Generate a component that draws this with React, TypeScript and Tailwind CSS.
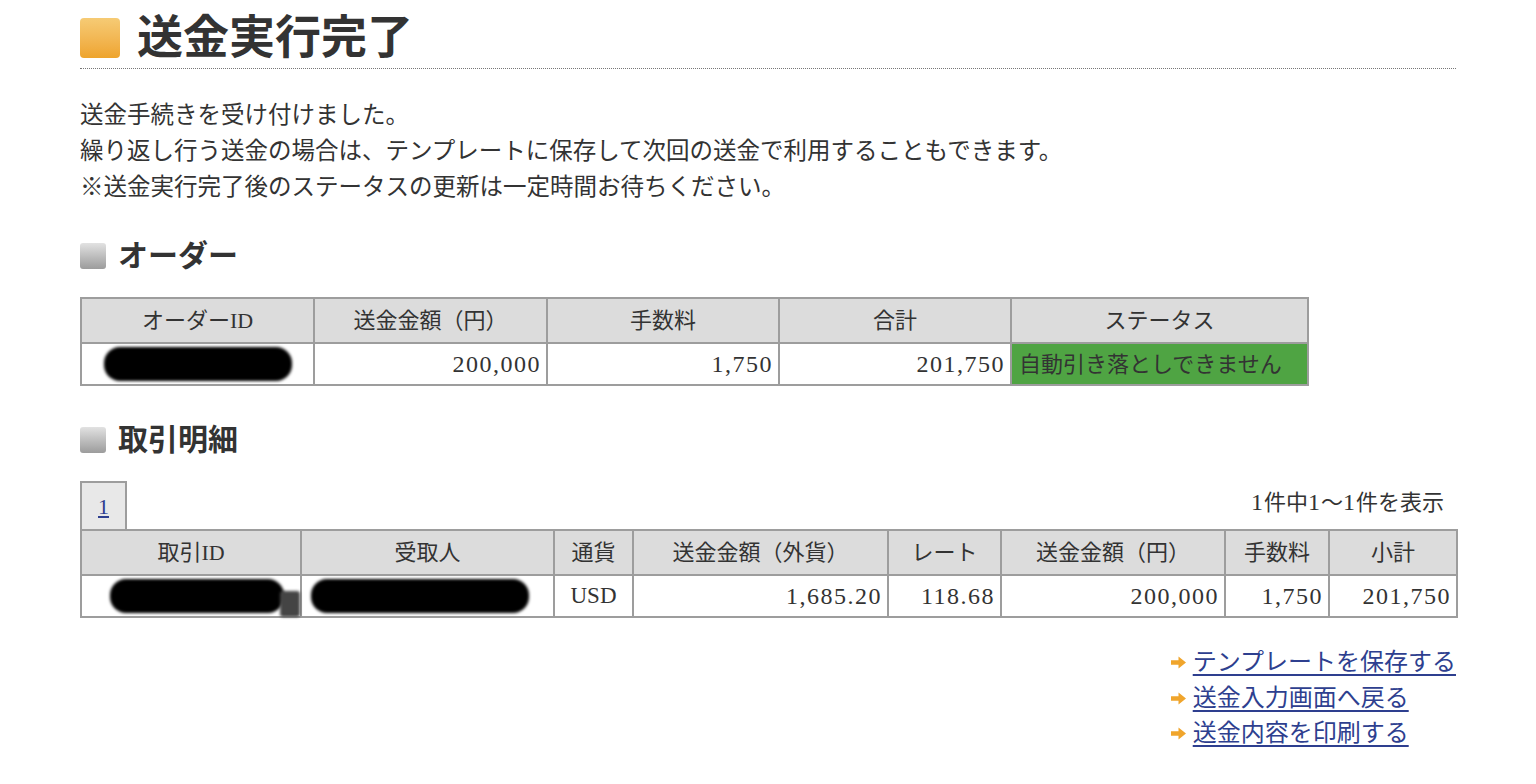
import React from "react";

const FONT = '"Liberation Serif", "Noto Sans CJK JP", serif';

function Arrow() {
  return (
    <svg width="17" height="15" viewBox="0 0 17 15" className="shrink-0">
      <path d="M1 5.3 H8.5 V1.5 L16 7.5 L8.5 13.5 V9.7 H1 Z" fill="#f0a52c" />
    </svg>
  );
}

function Blob({ w, extra, start }: { w: number; extra?: boolean; start?: number }) {
  return (
    <div
      className="relative flex items-center"
      style={start !== undefined ? { paddingLeft: start } : { justifyContent: "center" }}
    >
      <div className="relative">
        <div
          className="h-[34px] rounded-[16px] bg-black blur-[1.5px]"
          style={{ width: w }}
        />
        {extra && (
          <div className="absolute left-[170px] top-[12px] h-[26px] w-[20px] rounded-[3px] bg-[#444] blur-[1.5px]" />
        )}
      </div>
    </div>
  );
}

function SectionHeading({ children }: { children: React.ReactNode }) {
  return (
    <div className="flex h-[40px] items-center gap-[12px]">
      <div className="h-[26px] w-[26px] rounded-[3px] bg-gradient-to-b from-[#e2e2e2] to-[#9c9c9c]" />
      <h2 className="text-[30px] font-bold leading-[40px] text-[#333]">{children}</h2>
    </div>
  );
}

const th = "border-2 border-[#9d9d9d] bg-[#dcdcdc] h-[45px] text-center font-normal text-[22px] text-[#333]";
const td = "border-2 border-[#9d9d9d] bg-white h-[42px] text-[22px] text-[#333] px-[7px]";
const num = "text-right !text-[24px] tracking-[1.5px] !pr-[5px]";

export default function App() {
  return (
    <div className="min-h-screen bg-white px-[80px] pt-[14px]" style={{ fontFamily: FONT }}>
      {/* Title */}
      <div className="flex h-[48px] items-center gap-[17px]">
        <div className="h-[40px] w-[40px] rounded-[4px] bg-gradient-to-b from-[#f6cb74] to-[#eea42c]" />
        <h1 className="text-[46px] font-bold leading-[48px] text-[#333]">送金実行完了</h1>
      </div>
      <div className="mt-[6px] border-b border-dotted border-[#777]" />

      {/* Paragraph */}
      <div className="mt-[28px] text-[23.5px] leading-[36px] text-[#333]">
        <p>送金手続きを受け付けました。</p>
        <p>繰り返し行う送金の場合は、テンプレートに保存して次回の送金で利用することもできます。</p>
        <p>※送金実行完了後のステータスの更新は一定時間お待ちください。</p>
      </div>

      {/* Order */}
      <div className="mt-[31px]">
        <SectionHeading>オーダー</SectionHeading>
      </div>
      <table className="mt-[21px] w-[1227px] table-fixed border-collapse">
        <thead>
          <tr>
            <th className={`${th} w-[233px]`}>オーダーID</th>
            <th className={`${th} w-[233px]`}>送金金額（円）</th>
            <th className={`${th} w-[232px]`}>手数料</th>
            <th className={`${th} w-[232px]`}>合計</th>
            <th className={`${th} w-[297px]`}>ステータス</th>
          </tr>
        </thead>
        <tbody>
          <tr>
            <td className={td}>
              <Blob w={188} />
            </td>
            <td className={`${td} ${num}`}>200,000</td>
            <td className={`${td} ${num}`}>1,750</td>
            <td className={`${td} ${num}`}>201,750</td>
            <td className={`${td} !bg-[#4fa443] text-left text-[#1e2a1c]`}>自動引き落としできません</td>
          </tr>
        </tbody>
      </table>

      {/* Transactions */}
      <div className="mt-[34px]">
        <SectionHeading>取引明細</SectionHeading>
      </div>
      <div className="mt-[21px] flex items-start justify-between">
        <div className="flex h-[48px] w-[47px] items-center justify-center border-2 border-b-0 border-[#9d9d9d] bg-[#e8e8e8]">
          <a href="#" className="text-[22px] text-[#2e3f8f] underline">1</a>
        </div>
        <div className="mt-[3px] pr-[12px] text-[22px] leading-[36px] text-[#333]">
          <span className="text-[24px] tracking-[1px]">1</span>件中<span className="text-[24px] tracking-[1px]">1</span>〜<span className="text-[24px] tracking-[1px]">1</span>件を表示
        </div>
      </div>
      <table className="w-full table-fixed border-collapse">
        <thead>
          <tr>
            <th className={`${th} w-[220px]`}>取引ID</th>
            <th className={`${th} w-[253px]`}>受取人</th>
            <th className={`${th} w-[79px]`}>通貨</th>
            <th className={`${th} w-[255px]`}>送金金額（外貨）</th>
            <th className={`${th} w-[113px]`}>レート</th>
            <th className={`${th} w-[224px]`}>送金金額（円）</th>
            <th className={`${th} w-[104px]`}>手数料</th>
            <th className={`${th} w-[128px]`}>小計</th>
          </tr>
        </thead>
        <tbody>
          <tr>
            <td className={`${td} !px-0`}>
              <Blob w={174} extra start={28} />
            </td>
            <td className={`${td} !px-0`}>
              <Blob w={218} start={9} />
            </td>
            <td className={`${td} text-center !text-[23px]`}>USD</td>
            <td className={`${td} ${num}`}>1,685.20</td>
            <td className={`${td} ${num}`}>118.68</td>
            <td className={`${td} ${num}`}>200,000</td>
            <td className={`${td} ${num}`}>1,750</td>
            <td className={`${td} ${num}`}>201,750</td>
          </tr>
        </tbody>
      </table>

      {/* Links */}
      <div className="ml-auto mt-[27px] flex w-fit flex-col text-[24px] leading-[35.5px]">
        {["テンプレートを保存する", "送金入力画面へ戻る", "送金内容を印刷する"].map((t) => (
          <div key={t} className="flex items-center gap-[6px]">
            <Arrow />
            <a href="#" className="text-[#2e3f8f] underline underline-offset-[4px]">{t}</a>
          </div>
        ))}
      </div>
    </div>
  );
}
